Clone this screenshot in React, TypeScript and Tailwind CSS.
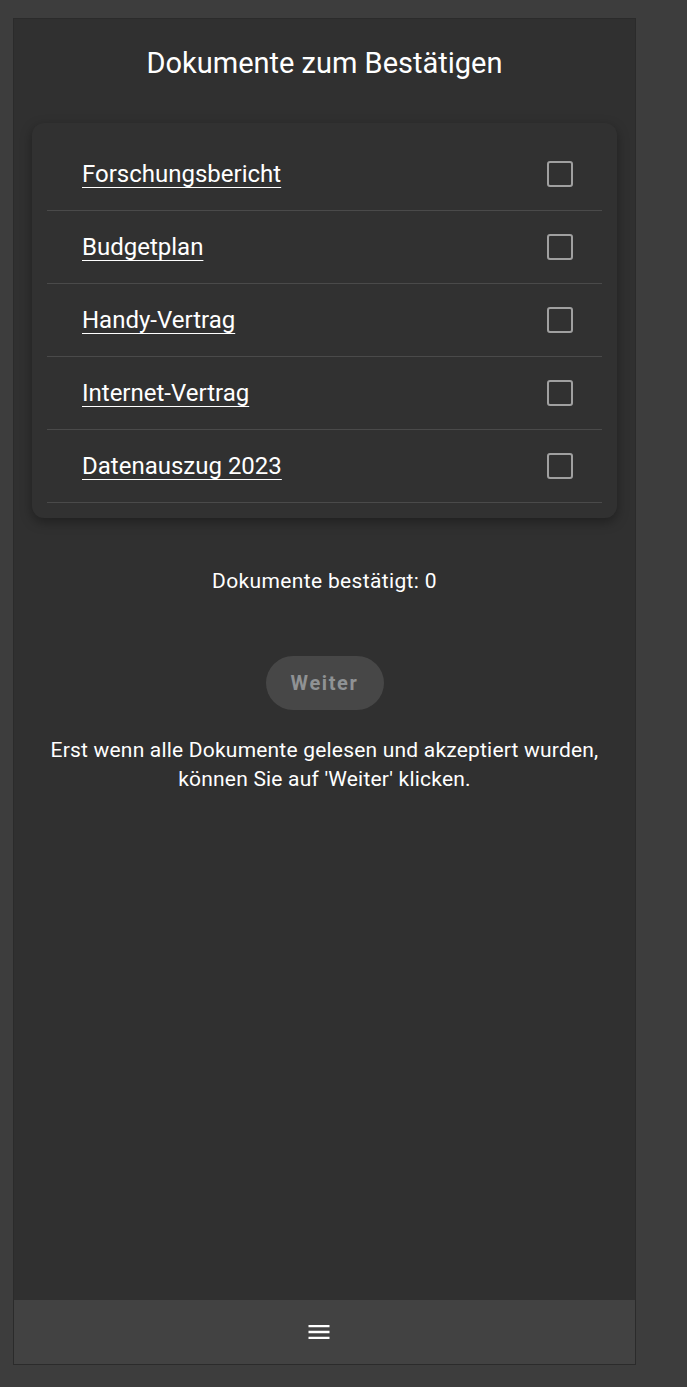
const documents = [
  "Forschungsbericht",
  "Budgetplan",
  "Handy-Vertrag",
  "Internet-Vertrag",
  "Datenauszug 2023",
]

function MenuIcon() {
  return (
    <svg width="28" height="28" viewBox="0 0 24 24" fill="white">
      <path d="M3 18h18v-2H3v2zm0-5h18v-2H3v2zm0-7v2h18V6H3z" />
    </svg>
  )
}

export default function App() {
  return (
    <div className="min-h-[1387px] bg-[#3d3d3d] pt-[18px] pl-[13px] font-['Roboto',sans-serif]">
      <div className="flex h-[1347px] w-[623px] flex-col border border-[#2b2b2b] bg-[#303030]">
        <main className="flex flex-1 flex-col">
          <h1 className="pt-[27px] text-center text-[29px] leading-[34px] text-white">
            Dokumente zum Bestätigen
          </h1>
          <div className="mx-[18px] mt-[43px] rounded-[12px] bg-[#313131] p-[15px] shadow-[0_4px_12px_rgba(0,0,0,0.35)]">
            {documents.map((title) => (
              <div
                key={title}
                className="flex h-[73px] items-center justify-between border-b border-[#4a4a4a] pr-[29px] pl-[35px]"
              >
                <a
                  href="#"
                  className="text-[24px] leading-[28px] text-white underline decoration-1 underline-offset-[5px]"
                >
                  {title}
                </a>
                <span className="h-[26px] w-[26px] rounded-[3px] border-2 border-[#a0a0a0]" />
              </div>
            ))}
          </div>
          <p className="mt-[50px] text-center text-[21px] leading-[26px] tracking-[0.35px] text-white">
            Dokumente bestätigt: 0
          </p>
          <div className="mt-[62px] flex justify-center">
            <button
              disabled
              className="h-[54px] w-[118px] rounded-full bg-[#474747] text-[20px] font-bold tracking-[1.6px] text-[#8f9294]"
            >
              Weiter
            </button>
          </div>
          <p className="mt-[26px] text-center text-[21px] leading-[29px] tracking-[0.2px] text-white">
            Erst wenn alle Dokumente gelesen und akzeptiert wurden,
            <br />
            können Sie auf 'Weiter' klicken.
          </p>
        </main>
        <nav className="flex h-[64px] items-center justify-center bg-[#424242]">
          <span className="mr-[12px] flex">
            <MenuIcon />
          </span>
        </nav>
      </div>
    </div>
  )
}
